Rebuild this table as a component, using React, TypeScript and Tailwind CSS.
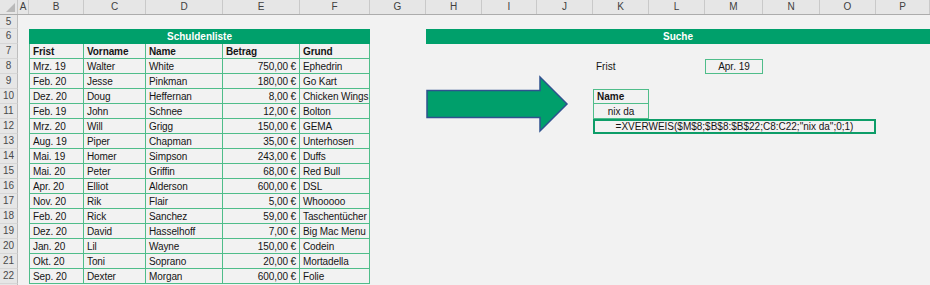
import React from "react";

// column template: row header, A..P
const GRID =
  "grid grid-cols-[18px_11px_55px_62px_77px_77px_70px_56px_56px_55px_56px_56px_56px_58px_57px_56px_54px]";

const LETTERS = ["A", "B", "C", "D", "E", "F", "G", "H", "I", "J", "K", "L", "M", "N", "O", "P"];

interface Debt {
  frist: string;
  vorname: string;
  name: string;
  betrag: string;
  grund: string;
}

const debts: Debt[] = [
  { frist: "Mrz. 19", vorname: "Walter", name: "White", betrag: "750,00 €", grund: "Ephedrin" },
  { frist: "Feb. 20", vorname: "Jesse", name: "Pinkman", betrag: "180,00 €", grund: "Go Kart" },
  { frist: "Dez. 20", vorname: "Doug", name: "Heffernan", betrag: "8,00 €", grund: "Chicken Wings" },
  { frist: "Feb. 19", vorname: "John", name: "Schnee", betrag: "12,00 €", grund: "Bolton" },
  { frist: "Mrz. 20", vorname: "Will", name: "Grigg", betrag: "150,00 €", grund: "GEMA" },
  { frist: "Aug. 19", vorname: "Piper", name: "Chapman", betrag: "35,00 €", grund: "Unterhosen" },
  { frist: "Mai. 19", vorname: "Homer", name: "Simpson", betrag: "243,00 €", grund: "Duffs" },
  { frist: "Mai. 20", vorname: "Peter", name: "Griffin", betrag: "68,00 €", grund: "Red Bull" },
  { frist: "Apr. 20", vorname: "Elliot", name: "Alderson", betrag: "600,00 €", grund: "DSL" },
  { frist: "Nov. 20", vorname: "Rik", name: "Flair", betrag: "5,00 €", grund: "Whooooo" },
  { frist: "Feb. 20", vorname: "Rick", name: "Sanchez", betrag: "59,00 €", grund: "Taschentücher" },
  { frist: "Dez. 20", vorname: "David", name: "Hasselhoff", betrag: "7,00 €", grund: "Big Mac Menu" },
  { frist: "Jan. 20", vorname: "Lil", name: "Wayne", betrag: "150,00 €", grund: "Codein" },
  { frist: "Okt. 20", vorname: "Toni", name: "Soprano", betrag: "20,00 €", grund: "Mortadella" },
  { frist: "Sep. 20", vorname: "Dexter", name: "Morgan", betrag: "600,00 €", grund: "Folie" },
];

function SheetRow({
  n,
  tall = false,
  children,
}: {
  n?: number;
  tall?: boolean;
  children?: React.ReactNode;
}) {
  return (
    <div className={`${GRID} ${tall ? "h-[15px]" : "h-[14px]"}`}>
      <div className="flex items-center justify-center border-b border-r border-b-[#d6d6d6] border-r-[#bdbdbd] bg-[#e6e6e6] text-[10px] text-[#4a4a4a]">
        {n}
      </div>
      {children}
    </div>
  );
}

// bordered cell of the debt table
function Td({
  first = false,
  right = false,
  bold = false,
  children,
}: {
  first?: boolean;
  right?: boolean;
  bold?: boolean;
  children: React.ReactNode;
}) {
  return (
    <div
      className={`flex items-center whitespace-nowrap border-b border-r border-[#4fbd8a] px-[3px] pt-px tracking-[-0.1px] ${
        first ? "border-l" : ""
      } ${right ? "justify-end" : ""} ${bold ? "font-bold" : ""}`}
    >
      {children}
    </div>
  );
}

function Arrow() {
  return (
    <svg
      className="absolute left-[424px] top-[74px]"
      width="148"
      height="60"
      viewBox="0 0 148 60"
    >
      <path
        d="M3 16.5 L116 16.5 L116 3 L143 30 L116 57 L116 43.5 L3 43.5 Z"
        fill="#009f6b"
        stroke="#2f528f"
        strokeWidth="1.5"
        strokeLinejoin="miter"
      />
    </svg>
  );
}

export default function App() {
  return (
    <div className="relative h-[285px] w-[930px] overflow-hidden bg-[#f2f2f2] font-['Liberation_Sans',Arial,sans-serif] text-[10px] leading-none text-[#151515]">
      {/* column headers */}
      <div className={`${GRID} h-[15px] border-b border-[#acacac] bg-[#e6e6e6]`}>
        <div className="relative border-r border-[#c6c6c6]">
          <svg className="absolute bottom-[2px] right-[2px]" width="9" height="9" viewBox="0 0 9 9">
            <path d="M9 0 L9 9 L0 9 Z" fill="#b9b9b9" />
          </svg>
        </div>
        {LETTERS.map((l) => (
          <div
            key={l}
            className="flex items-center justify-center border-r border-[#c9c9c9] text-[10px] text-[#3f3f3f]"
          >
            {l}
          </div>
        ))}
      </div>

      <SheetRow n={5} />

      <SheetRow n={6} tall>
        <div />
        <div className="col-span-5 flex items-center justify-center bg-[#00a06b] pt-px font-bold text-white">
          Schuldenliste
        </div>
        <div />
        <div className="col-span-9 flex items-center justify-center bg-[#00a06b] pt-px font-bold text-white">
          Suche
        </div>
      </SheetRow>

      <SheetRow n={7} tall>
        <div />
        <Td first bold>Frist</Td>
        <Td bold>Vorname</Td>
        <Td bold>Name</Td>
        <Td bold>Betrag</Td>
        <Td bold>Grund</Td>
      </SheetRow>

      {debts.map((d, i) => {
        const n = i + 8;
        return (
          <SheetRow key={n} n={n} tall>
            <div />
            <Td first>{d.frist}</Td>
            <Td>{d.vorname}</Td>
            <Td>{d.name}</Td>
            <Td right>{d.betrag}</Td>
            <Td>{d.grund}</Td>

            {n === 8 && (
              <>
                <div className="col-start-12 flex items-center px-[3px] pt-px">Frist</div>
                <div className="col-start-14 flex items-center justify-center border border-[#4fbd8a] pt-px">
                  Apr. 19
                </div>
              </>
            )}
            {n === 10 && (
              <div className="col-start-12 flex items-center border border-[#4fbd8a] px-[3px] pt-px font-bold">
                Name
              </div>
            )}
            {n === 11 && (
              <div className="col-start-12 flex items-center justify-center border-x border-b border-[#4fbd8a] pt-px">
                nix da
              </div>
            )}
            {n === 12 && (
              <div className="col-span-5 col-start-12 flex items-center justify-center whitespace-nowrap border-2 border-[#0d9d68]">
                =XVERWEIS($M$8;$B$8:$B$22;C8:C22;"nix da";0;1)
              </div>
            )}
          </SheetRow>
        );
      })}

      {/* next row, only its top edge shows */}
      <SheetRow tall />

      <Arrow />
    </div>
  );
}
